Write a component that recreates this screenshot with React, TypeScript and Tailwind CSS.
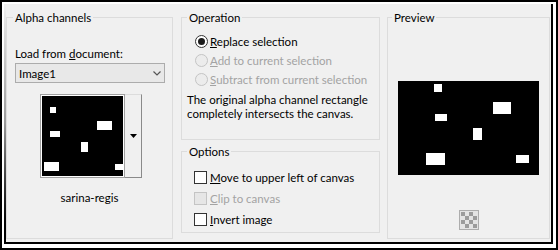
import React from 'react';

// small shapes reused by the form rows
const Radio = ({ checked, disabled }: { checked?: boolean; disabled?: boolean }) => (
  <span
    className={`w-[13px] h-[13px] rounded-full border flex items-center justify-center shrink-0 ${
      disabled ? 'border-[#c4c4c4] bg-[#ececec]' : 'border-[#333333] bg-white'
    }`}
  >
    {checked && <span className="w-[7px] h-[7px] rounded-full bg-[#1b1b1b]" />}
  </span>
);

const Check = ({ disabled }: { disabled?: boolean }) => (
  <span
    className={`w-[13px] h-[13px] border shrink-0 ${
      disabled ? 'border-[#c4c4c4] bg-[#e6e6e6]' : 'border-[#333333] bg-white'
    }`}
  />
);

const thumbRects = [
  [8, 11, 6, 6],
  [55, 25, 15, 9],
  [8, 35, 10, 6],
  [39, 46, 7, 10],
  [2, 66, 15, 9],
  [73, 68, 9, 6],
];

const previewRects = [
  [36, 3, 8, 8],
  [95, 21, 18, 12],
  [37, 33, 12, 7],
  [75, 47, 9, 12],
  [28, 72, 19, 12],
  [118, 74, 13, 8],
];

const Mask = ({ w, h, rects }: { w: number; h: number; rects: number[][] }) => (
  <svg width={w} height={h} className="block">
    <rect width={w} height={h} fill="#000" />
    {rects.map(([x, y, rw, rh], i) => (
      <rect key={i} x={x} y={y} width={rw} height={rh} fill="#fff" />
    ))}
  </svg>
);

const Checker = () => (
  <svg width="20" height="20" className="block">
    <rect x="0.5" y="0.5" width="19" height="19" fill="#e4e4e4" stroke="#adadad" />
    {[0, 1, 2, 3].map((r) =>
      [0, 1, 2, 3].map((c) =>
        (r + c) % 2 === 0 ? (
          <rect key={`${r}-${c}`} x={2 + c * 4} y={2 + r * 4} width="4" height="4" fill="#9c9c9c" />
        ) : null
      )
    )}
  </svg>
);

export default function App() {
  return (
    <div className="w-[558px] h-[250px] bg-white font-['Lato',sans-serif] text-[11.5px] leading-[15px] text-black">
      <div className="h-full border-2 border-black pt-[2px] pl-[2px] pr-[3px] pb-[4px]">
        <div className="flex h-full bg-[#f0f0f0] border-r-2 border-b-2 border-black">
          <div className="w-[2px] bg-linear-to-b from-[#f0f0f0] via-[#9a9a9a] to-black" />
          <div className="flex flex-1 pt-[6px] pb-[3px]">
            {/* Alpha channels */}
            <fieldset className="w-[167px] h-[229px] border border-[#dcdcdc]">
              <legend className="ml-[6px] px-[2px]">Alpha channels</legend>
              <div className="flex flex-col">
                <div className="mt-[21px] pl-[8px]">
                  Load from <u>d</u>ocument:
                </div>
                <div className="mt-[2px] ml-[8px] w-[150px] h-[20px] border border-[#acacac] bg-[#e8e8e8] flex items-center justify-between pl-[3px] pr-[3px]">
                  <span>Image1</span>
                  <svg width="8" height="5" className="block">
                    <path d="M0.5 0.5 L4 4 L7.5 0.5" fill="none" stroke="#555" strokeWidth="1.2" />
                  </svg>
                </div>
                <div className="mt-[11px] ml-[33px] flex h-[84px]">
                  <div className="border border-[#a0a0a0] bg-white p-[1px]">
                    <Mask w={81} h={80} rects={thumbRects} />
                  </div>
                  <div className="w-[17px] bg-[#f0f0f0] border-t border-t-[#dcdcdc] border-r border-b border-[#8a8a8a] flex items-center justify-center">
                    <svg width="7" height="4" className="block">
                      <path d="M0 0 H7 L3.5 4 Z" fill="#000" />
                    </svg>
                  </div>
                </div>
                <div className="mt-[12px] text-center">sarina-regis</div>
              </div>
            </fieldset>

            <div className="ml-[8px] w-[199px] flex flex-col">
              {/* Operation */}
              <fieldset className="h-[130px] border border-[#dcdcdc]">
                <legend className="ml-[5px] px-[2px]">Operation</legend>
                <div className="pt-[7px]">
                  <div className="h-[19px] flex items-center pl-[13px]">
                    <Radio checked />
                    <span className="ml-[2px]">
                      <u>R</u>eplace selection
                    </span>
                  </div>
                  <div className="h-[19px] flex items-center pl-[13px] text-[#a3a3a3]">
                    <Radio disabled />
                    <span className="ml-[2px]">
                      <u>A</u>dd to current selection
                    </span>
                  </div>
                  <div className="h-[19px] flex items-center pl-[13px] text-[#a3a3a3]">
                    <Radio disabled />
                    <span className="ml-[2px]">
                      <u>S</u>ubtract from current selection
                    </span>
                  </div>
                  <p className="mt-[4px] pl-[5px] leading-[14px]">
                    The original alpha channel rectangle
                    <br />
                    completely intersects the canvas.
                  </p>
                </div>
              </fieldset>

              {/* Options */}
              <fieldset className="mt-[4px] h-[89px] border border-[#dcdcdc]">
                <legend className="ml-[5px] px-[2px]">Options</legend>
                <div className="pt-[8px]">
                  <div className="h-[21px] flex items-center pl-[12px]">
                    <Check />
                    <span className="ml-[3px]">
                      <u>M</u>ove to upper left of canvas
                    </span>
                  </div>
                  <div className="h-[21px] flex items-center pl-[12px] text-[#a3a3a3]">
                    <Check disabled />
                    <span className="ml-[3px]">
                      <u>C</u>lip to canvas
                    </span>
                  </div>
                  <div className="h-[21px] flex items-center pl-[12px]">
                    <Check />
                    <span className="ml-[3px]">
                      <u>I</u>nvert image
                    </span>
                  </div>
                </div>
              </fieldset>
            </div>

            {/* Preview */}
            <fieldset className="ml-[7px] w-[163px] h-[229px] border border-[#dcdcdc]">
              <legend className="ml-[4px] px-[2px]">Preview</legend>
              <div className="flex flex-col items-center">
                <div className="mt-[56px]">
                  <Mask w={141} h={94} rects={previewRects} />
                </div>
                <div className="mt-[35px]">
                  <Checker />
                </div>
              </div>
            </fieldset>
          </div>
        </div>
      </div>
    </div>
  );
}
